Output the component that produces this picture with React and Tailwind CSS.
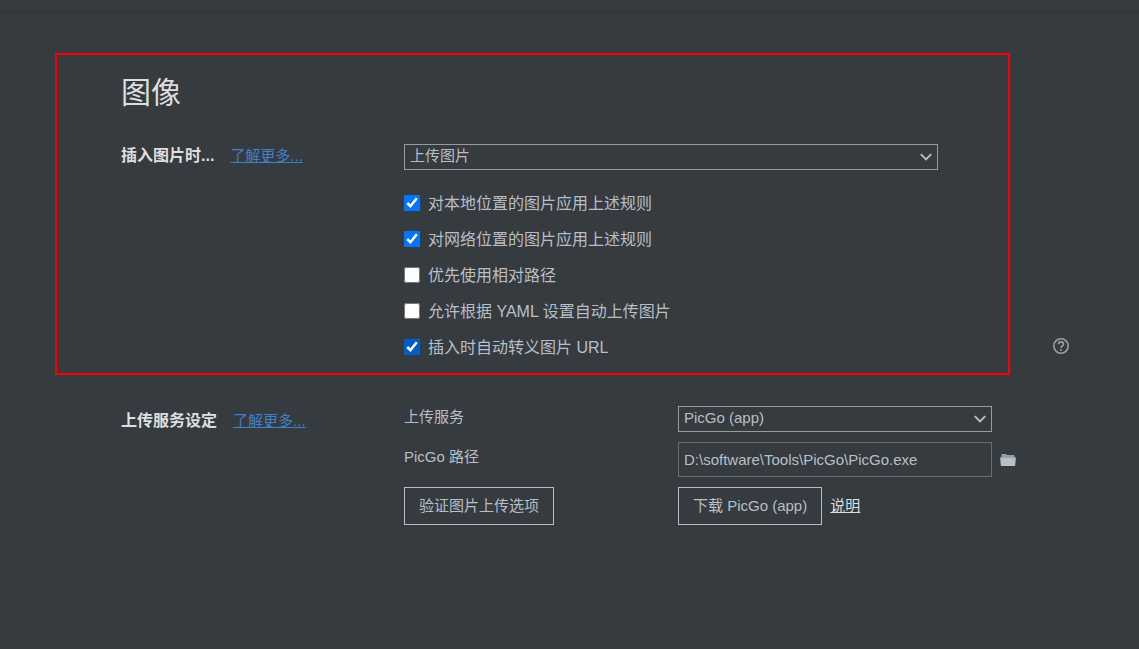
const rules = [
  { id: 'local', text: '对本地位置的图片应用上述规则', on: true, accent: 'accent-[#0075ff]' },
  { id: 'network', text: '对网络位置的图片应用上述规则', on: true, accent: 'accent-[#0075ff]' },
  { id: 'relative', text: '优先使用相对路径', on: false, accent: 'accent-[#0075ff]' },
  { id: 'yaml', text: '允许根据 YAML 设置自动上传图片', on: false, accent: 'accent-[#0075ff]' },
  { id: 'escape', text: '插入时自动转义图片 URL', on: true, accent: 'accent-[#005cc8]' },
];

function MoreLink() {
  return (
    <a href="#more" className="text-[15px] font-normal text-[#4080c4] underline">
      了解更多...
    </a>
  );
}

function Select({ id, option }) {
  return (
    <div className="relative">
      <select
        id={id}
        className="block h-[26px] w-full appearance-none border border-[#999a9c] bg-transparent pr-6 pb-0.5 pl-[5px]"
      >
        <option>{option}</option>
      </select>
      <svg
        viewBox="0 0 12 8"
        className="pointer-events-none absolute top-[9px] right-[6px] h-2 w-3"
        fill="none"
        stroke="currentColor"
        strokeWidth="1.9"
        aria-hidden="true"
      >
        <path d="M.8 1.200L6 6.400l5.200-5.200" />
      </svg>
    </div>
  );
}

function HelpIcon() {
  return (
    <svg viewBox="0 0 16 16" className="size-4" fill="none" stroke="currentColor" aria-hidden="true">
      <circle cx="8" cy="8" r="7.2" strokeWidth="1.6" />
      <path d="M5.500 6.300C5.500 4.800 6.600 3.900 8 3.900s2.500.9 2.500 2.300C10.500 7.700 8 7.900 8 10" strokeWidth="1.6" />
      <path d="M8 11v1.700" strokeWidth="1.700" />
    </svg>
  );
}

function FolderIcon() {
  return (
    <svg viewBox="0 0 16 16" className="size-4" fill="currentColor" aria-hidden="true">
      <path d="M1.500 5V3q0-.9.900-.9h3.400q.7 0 .9.900h7q.8 0 .8.800v1.200z" opacity=".75" />
      <path d="M.9 5.200h14.200q.8 0 .7.800l-.6 7.300q-.1.700-.8.700H1.600q-.7 0-.8-.7L.2 6q-.1-.8.700-.8z" />
    </svg>
  );
}

export default function App() {
  return (
    <div className="min-h-screen bg-[#363b40] font-['Liberation_Sans','Noto_Sans_CJK_SC',sans-serif] text-[15px] text-[#b8bfc6]">
      <header className="h-3 border-b border-[#2f3337]" />
      <main className="pt-[41px] pr-[70px] pl-[55px]">
        <div className="flex items-end gap-[43px]">
          <section className="min-w-0 flex-1 border-2 border-[#ff0000] pt-5 pr-[70px] pb-2 pl-16">
            <h1 className="text-[30px] leading-9 text-[#dedede]">图像</h1>
            <div className="mt-[33px] grid grid-cols-[283px_1fr]">
              <div className="flex h-6 items-center gap-4">
                <label htmlFor="insert" className="text-base font-bold text-[#dedede]">
                  插入图片时...
                </label>
                <MoreLink />
              </div>
              <div>
                <Select id="insert" option="上传图片" />
                <div className="mt-[15px]">
                  {rules.map((r) => (
                    <label key={r.id} className="flex h-9 items-center gap-2 text-base">
                      <input type="checkbox" defaultChecked={r.on} className={'size-4 ' + r.accent} />
                      <span className="pt-0.5">{r.text}</span>
                    </label>
                  ))}
                </div>
              </div>
            </div>
          </section>
          <button aria-label="帮助" className="mb-[21px] text-[#9a9fa5]">
            <HelpIcon />
          </button>
        </div>

        <section className="mt-[31px] grid grid-cols-[283px_1fr] pr-[53px] pl-[66px]">
          <div className="flex h-[30px] items-center gap-4">
            <h2 className="text-base font-bold text-[#dedede]">上传服务设定</h2>
            <MoreLink />
          </div>
          <div className="grid grid-cols-[274px_1fr] gap-y-2.5">
            <label htmlFor="service" className="leading-[22px]">上传服务</label>
            <div className="pr-6">
              <Select id="service" option="PicGo (app)" />
            </div>

            <label htmlFor="path" className="leading-[30px]">PicGo 路径</label>
            <div className="flex items-center gap-2">
              <input
                id="path"
                type="text"
                defaultValue="D:\software\Tools\PicGo\PicGo.exe"
                className="h-[35px] min-w-0 flex-1 border border-[#6a6d70] bg-transparent px-[5px]"
              />
              <button aria-label="浏览">
                <FolderIcon />
              </button>
            </div>

            <div>
              <button className="h-[38px] border border-[#b8bfc6] px-3.5">验证图片上传选项</button>
            </div>
            <div className="flex items-center gap-2">
              <button className="h-[38px] border border-[#b8bfc6] px-3.5">下载 PicGo (app)</button>
              <a href="#help" className="text-[#dedede] underline">说明</a>
            </div>
          </div>
        </section>
      </main>
    </div>
  );
}
